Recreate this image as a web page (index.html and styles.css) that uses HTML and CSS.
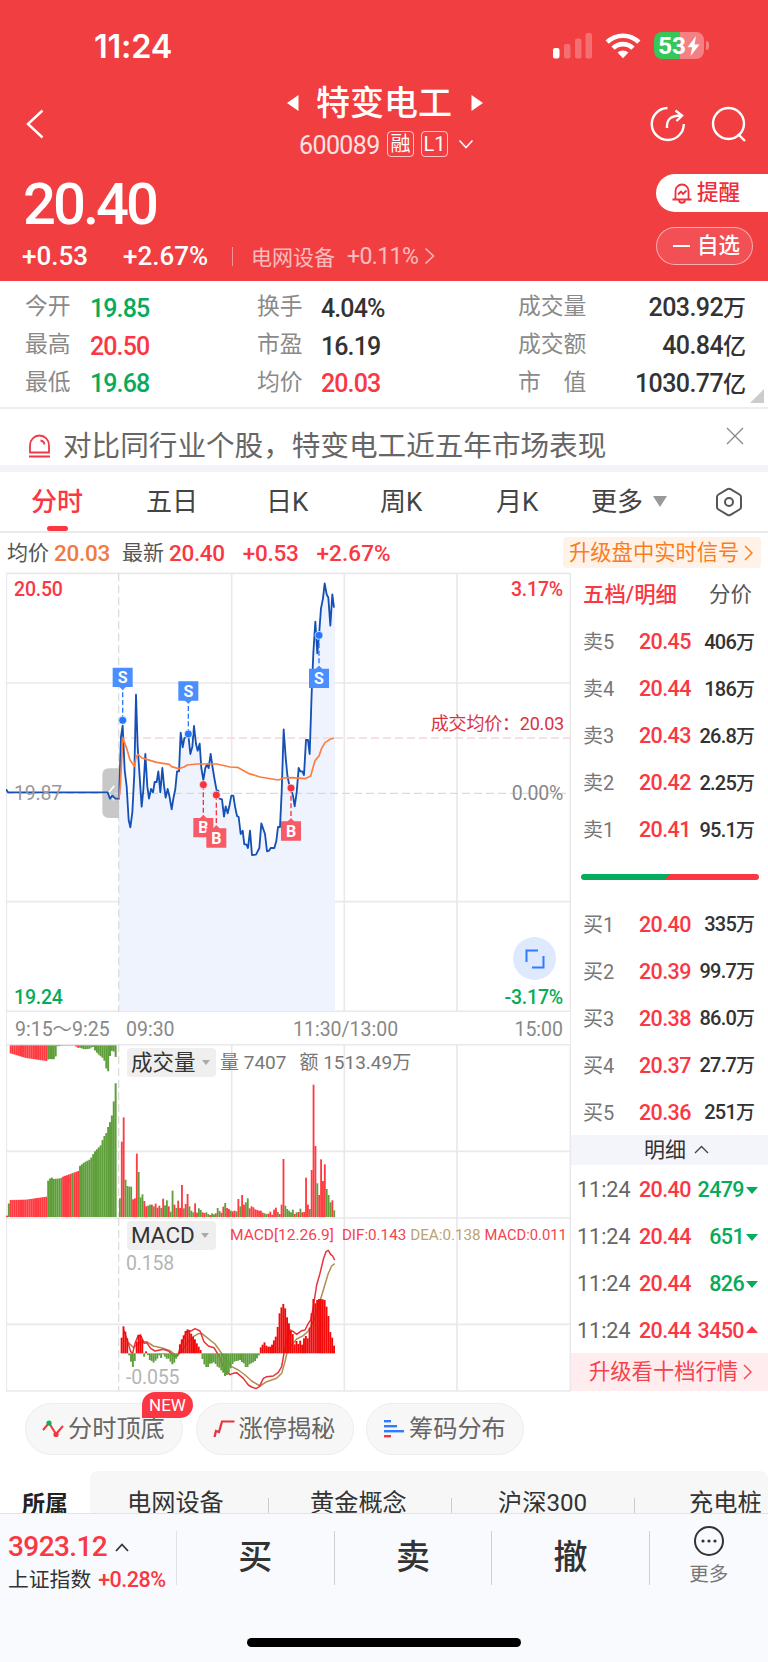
FILE: index.html
```html
<!doctype html>
<html lang="zh-CN">
<head>
  <meta charset="utf-8" />
  <meta name="viewport" content="width=device-width,initial-scale=1" />
  <title>特变电工 600089</title>
  <link rel="stylesheet" href="styles.css">
</head>

<body>
<header class="top">
  <div class="status">
    <div class="clock">11:24</div>
    <svg class="signal" width="40" height="26" viewBox="0 0 40 26" fill="#fff">
      <rect x="0" y="15" width="6.5" height="10.5" rx="2"/>
      <g opacity=".25"><rect x="11" y="11" width="6.5" height="14.5" rx="2"/><rect x="22" y="5.5" width="6.5" height="20" rx="2"/><rect x="32.5" y="0" width="6.5" height="25.5" rx="2"/></g>
    </svg>
    <svg class="wifi" width="36" height="27" viewBox="0 0 36 27">
      <g fill="none" stroke="#fff" stroke-width="4.6"><path d="M2.2 10.2a22.4 22.4 0 0 1 31.6 0"/><path d="M8 16.2a14.2 14.2 0 0 1 20 0"/></g>
      <path fill="#fff" d="M12.6 20.6a7.8 7.8 0 0 1 10.8 0L18 26.3z"/>
    </svg>
    <div class="battery">53<svg width="13" height="20" viewBox="0 0 13 20"><path fill="#fff" d="M9 0 .5 11.2h4.7L3.6 20l8.9-11.6H7.6z"/></svg></div>
  </div>

  <div class="nav">
    <svg class="back" width="20" height="32" viewBox="0 0 20 32"><path d="M17.5 2.5 3 16l14.500 13.500" fill="none" stroke="#fff" stroke-width="2.4"/></svg>
    <div class="name">
      <div class="title">
        <svg width="12" height="18" viewBox="0 0 12 18"><path fill="#fff" d="M11.500 1v16L0 9z"/></svg>
        <h1>特变电工</h1>
        <svg width="12" height="18" viewBox="0 0 12 18"><path fill="#fff" d="M.5 1v16L12 9z"/></svg>
      </div>
      <div class="code">
        <span class="num">600089</span><span class="tag">融</span><span class="tag l1">L1</span>
        <svg width="16" height="11" viewBox="0 0 16 11"><path d="m1.500 1.500 6.500 7 6.500-7" fill="none" stroke="#fff" stroke-width="1.600"/></svg>
      </div>
    </div>
    <div class="tools">
      <svg width="36" height="36" viewBox="0 0 36 36" fill="none" stroke="#fff" stroke-width="2.400">
        <path d="M17.500 2A16 16 0 1 0 33.800 18"/><path d="M17 22c-.6-8 3-12.500 14-12.500M25.500 4.500l6.500 5-5.500 5.500"/>
      </svg>
      <svg width="36" height="36" viewBox="0 0 36 36" fill="none" stroke="#fff" stroke-width="2.400">
        <circle cx="17.500" cy="17.500" r="15.500"/><path d="m27 28 7 7"/>
      </svg>
    </div>
  </div>

  <div class="quote">
    <div>
      <div class="price">20.40</div>
      <div class="change">
        <b>+0.53</b><b class="pct">+2.67%</b><i></i><span class="sector">电网设备</span><span class="spct">+0.11%</span>
        <svg width="11" height="18" viewBox="0 0 11 18"><path d="m1.500 1.500 8 7.500-8 7.500" fill="none" stroke="#fff" stroke-opacity=".65" stroke-width="1.500"/></svg>
      </div>
    </div>
    <div class="pills">
      <div class="pill alert">
        <svg width="20" height="22" viewBox="0 0 20 22" fill="none" stroke="#ee2f3c" stroke-width="1.800"><path d="M3.500 17V9a6.500 6.500 0 0 1 13 0v8M.5 17.500h19M7 18.500c.5 3 5.500 3 6 0M6 12.500l3-3 2 2.500 3.500-3.500"/></svg>提醒
      </div>
      <div class="pill fav"><i></i>自选</div>
    </div>
  </div>
</header>

<section class="stats">
  <span>今开</span><b class="dn">19.85</b><span>换手</span><b>4.04%</b><span>成交量</span><b class="r">203.92<em>万</em></b>
  <span>最高</span><b class="up">20.50</b><span>市盈</span><b>16.19</b><span>成交额</span><b class="r">40.84<em>亿</em></b>
  <span>最低</span><b class="dn">19.68</b><span>均价</span><b class="up">20.03</b><span>市　值</span><b class="r">1030.77<em>亿</em></b>
  <svg class="corner" width="14" height="14"><path fill="#ccc" d="M14 0v14H0z"/></svg>
</section>

<section class="notice">
  <svg width="23" height="24" viewBox="0 0 23 24" fill="none" stroke="#ee3a46" stroke-width="1.800"><path d="M2 18.500V11a9.500 9.500 0 0 1 19 0v7.500zM1 22.500h21M12.500 6.500c2.300.3 3.700 1.700 4 4"/></svg>
  <span>对比同行业个股，特变电工近五年市场表现</span>
  <svg class="close" width="18" height="18" viewBox="0 0 18 18"><path d="m1 1 16 16M17 1 1 17" stroke="#888" stroke-width="1.300"/></svg>
</section>

<nav class="tabs">
  <span class="on">分时</span><span>五日</span><span>日K</span><span>周K</span><span>月K</span><span>更多</span>
  <svg width="14" height="11"><path fill="#999" d="M0 0h14L7 11z"/></svg>
  <svg class="gear" width="28" height="30" viewBox="0 0 28 30" fill="none" stroke="#555" stroke-width="2"><path d="M12.500 2.200q1.500-.9 3 0l9 5.300q1.500.9 1.500 2.600v9.800q0 1.700-1.500 2.600l-9 5.300q-1.500.9-3 0l-9-5.300Q2 21.600 2 19.900v-9.800q0-1.700 1.500-2.600z"/><circle cx="14" cy="15" r="4"/></svg>
</nav>

<div class="info">
  <span>均价</span><b class="avg">20.03</b><span>最新</span><b>20.40</b><b class="d1">+0.53</b><b class="d2">+2.67%</b>
  <div class="upgrade">升级盘中实时信号<svg width="9" height="16" viewBox="0 0 9 16"><path d="m1 1 7 7-7 7" fill="none" stroke="#fa7d1e" stroke-width="1.500"/></svg></div>
</div>

<main class="main">
  <div class="chart">
    <div class="panel p-price">
      <svg width="565" height="440" viewBox="18 36 1695 1320">
        <g class="grid"><path d="M18 40H1711M18 369H1711M18 1025H1711M18 1354H1711M19 40V1356M695 40V1356M1033 40V1356M1371 40V1356M1711 40V1356"/></g>
        <path id="area" fill="#eef3fe"/>
        <path class="vdash" d="M356 40V1356"/>
        <path d="M307 645q0-20 20-20h30v149h-30q-20 0-20-20z" fill="#c8c8c8"/>
        <path d="M343 677l-18 22 18 22" fill="none" stroke="#fff" stroke-width="5"/>
        <path d="M357 534H1711" stroke="#f9d3d6" stroke-width="5" stroke-dasharray="24 12"/>
        <path d="M18 700H1711" stroke="#d3dbe3" stroke-width="4" stroke-dasharray="24 12"/>
        <path id="line" fill="none" stroke="#1550b4" stroke-width="5.500" stroke-linejoin="round"/>
        <path d="M357 716 361 680 368 533 380 565 390 600 403 619 408 592 414 583 426 594 440 598 470 607 508 613 515 620 535 626 552 621 562 615 590 612 650 612 690 621 712 622 745 640 780 651 835 660 850 654 875 653 915 656 932 648 937 630 945 602 957 588 965 565 975 548 990 538 1002 534" fill="none" stroke="#fb7d3f" stroke-width="5" stroke-linejoin="round"/>
        <g id="marks"></g>
      </svg>
      <span class="lb tl up">20.50</span><span class="lb tr up">3.17%</span>
      <span class="lb ml">19.87</span><span class="lb mr">0.00%</span>
      <span class="lb bl dn">19.24</span><span class="lb br dn">-3.17%</span>
      <span class="lb deal">成交均价：<em>20.03</em></span>
      <div class="full"><svg width="20" height="20" viewBox="0 0 20 20" fill="none" stroke="#2f7bff" stroke-width="2"><path d="M13 1.500H1.500V13M7 18.500h11.500V7"/></svg></div>
    </div>
    <div class="axis"><span>9:15～9:25</span><span>09:30</span><span>11:30/13:00</span><span>15:00</span></div>
    <div class="panel p-vol">
      <svg width="565" height="173" viewBox="18 132 1695 519">
        <g class="grid"><path d="M18 134H1711M18 454H1711M19 132V652M695 132V652M1033 132V652M1371 132V652M1711 132V652"/></g>
        <path class="vdash" d="M356 132V652"/>
        <g id="vol"></g>
      </svg>
      <div class="legend"><span class="pick">成交量<i></i></span><span>量 7407</span><span class="amt">额 1513.49万</span></div>
    </div>
    <div class="panel p-macd">
      <svg width="565" height="175" viewBox="18 21 1695 525">
        <g class="grid"><path d="M18 24H1711M18 343H1711M18 543H1711M19 21V543M695 21V543M1033 21V543M1371 21V543M1711 21V543"/></g>
        <path class="vdash" d="M356 24V543"/>
        <g fill="none" stroke-width="4.500" stroke-linejoin="round">
          <path stroke="#b28d55" d="M385 398 400 412 410 405 425 395 440 395 460 408 490 415 510 422 530 438 545 425 560 400 580 380 595 371 605 370 620 382 645 402 660 423 675 445 695 470 715 480 735 495 755 513 780 528 800 515 830 505 845 490 855 455 863 420 890 387 910 377 925 363 940 335 955 290 970 240 985 190 995 168 1004 161"/>
          <path stroke="#e8323a" d="M371 360 385 400 392 425 398 430 405 400 415 376 424 380 432 400 440 398 452 415 465 423 490 418 505 423 525 440 533 437 545 400 560 365 575 362 585 356 600 363 612 395 625 408 642 413 655 435 675 480 690 494 700 490 710 488 730 505 745 525 755 531 768 536 778 530 790 505 800 500 820 498 835 487 845 470 852 430 858 400 870 360 880 365 890 373 905 362 915 360 925 340 933 328 940 290 950 225 960 190 970 148 978 125 985 121 992 133 998 138 1004 150"/>
        </g>
        <g id="macd"></g>
      </svg>
      <div class="legend"><span class="pick">MACD<i></i></span><span class="m1">MACD[12.26.9]</span><span class="m2">DIF:0.143</span><span class="m3">DEA:0.138</span><span class="m4">MACD:0.011</span></div>
      <span class="lb hi">0.158</span><span class="lb lo">-0.055</span>
    </div>
  </div>

  <aside class="book">
    <div class="bookhead"><b>五档/明细</b><span>分价</span></div>
    <div class="lv"><span>卖5</span><b>20.45</b><em>406<u>万</u></em></div>
    <div class="lv"><span>卖4</span><b>20.44</b><em>186<u>万</u></em></div>
    <div class="lv"><span>卖3</span><b>20.43</b><em>26.8<u>万</u></em></div>
    <div class="lv"><span>卖2</span><b>20.42</b><em>2.25<u>万</u></em></div>
    <div class="lv"><span>卖1</span><b>20.41</b><em>95.1<u>万</u></em></div>
    <div class="ratio"><i></i></div>
    <div class="lv"><span>买1</span><b>20.40</b><em>335<u>万</u></em></div>
    <div class="lv"><span>买2</span><b>20.39</b><em>99.7<u>万</u></em></div>
    <div class="lv"><span>买3</span><b>20.38</b><em>86.0<u>万</u></em></div>
    <div class="lv"><span>买4</span><b>20.37</b><em>27.7<u>万</u></em></div>
    <div class="lv"><span>买5</span><b>20.36</b><em>251<u>万</u></em></div>
    <div class="band">明细<svg width="15" height="9" viewBox="0 0 15 9"><path d="m1 8 6.500-6.500L14 8" fill="none" stroke="#444" stroke-width="1.400"/></svg></div>
    <div class="tick"><span>11:24</span><b>20.40</b><em class="dn">2479</em><i class="dn"></i></div>
    <div class="tick"><span>11:24</span><b>20.44</b><em class="dn">651</em><i class="dn"></i></div>
    <div class="tick"><span>11:24</span><b>20.44</b><em class="dn">826</em><i class="dn"></i></div>
    <div class="tick"><span>11:24</span><b>20.44</b><em class="up">3450</em><i class="up"></i></div>
    <div class="ten">升级看十档行情<svg width="9" height="16" viewBox="0 0 9 16"><path d="m1 1 7 7-7 7" fill="none" stroke="#f5434e" stroke-width="1.400"/></svg></div>
  </aside>
</main>

<div class="chips">
  <div class="chip">
    <svg width="22" height="18" viewBox="0 0 22 18"><path d="m1 10 6-7 7 11 7-8" fill="none" stroke="#f5343f" stroke-width="2"/><circle cx="7" cy="3" r="2.600" fill="#0fae5c"/><circle cx="14" cy="14.500" r="2.600" fill="#f5343f"/></svg>分时顶底<span class="new">NEW</span>
  </div>
  <div class="chip">
    <svg width="22" height="18" viewBox="0 0 22 18"><path d="M1.500 17 3 11l3 1L9 1.500h12.500" fill="none" stroke="#e8323c" stroke-width="2.200"/></svg>涨停揭秘
  </div>
  <div class="chip">
    <svg width="22" height="18" viewBox="0 0 22 18" fill="#2f7bff"><rect x="1" y="0" width="7" height="2.400"/><rect x="1" y="5" width="13" height="2.400"/><rect x="1" y="10" width="20" height="2.400"/><rect x="1" y="15" width="7" height="2.400" fill="#f5343f"/></svg>筹码分布
  </div>
</div>

<section class="belong">
  <b>所属</b>
  <div class="tags"><span>电网设备</span><span>黄金概念</span><span>沪深300</span><span>充电桩</span></div>
</section>

<footer class="foot">
  <div class="bar">
    <div class="index">
      <div class="pt">3923.12<svg width="14" height="9" viewBox="0 0 14 9"><path d="m1 8 6-6.500L13 8" fill="none" stroke="#333" stroke-width="1.800"/></svg></div>
      <div class="ix">上证指数<b>+0.28%</b></div>
    </div>
    <div class="act">买</div><div class="act">卖</div><div class="act">撤</div>
    <div class="more">
      <svg width="32" height="32" viewBox="0 0 32 32"><circle cx="16" cy="16" r="14" fill="none" stroke="#333" stroke-width="2"/><g fill="#333"><circle cx="10" cy="16" r="1.600"/><circle cx="16" cy="16" r="1.600"/><circle cx="22" cy="16" r="1.600"/></g></svg>
      更多
    </div>
  </div>
  <div class="home"></div>
</footer>

<script>
const $=id=>document.getElementById(id);
const RED="#ff3b41",GREEN="#5f9f3b";

// price line, one point per minute
const pts="18,688 24,697 323,697 330,716 337,707 346,716 357,716 363,530 368,497 374,630 380,680 386,780 391,802 397,757 403,640 408,404 413,560 425,740 430,690 436,582 442,680 447,716 453,687 459,697 464,666 470,666 475,634 481,697 487,624 492,676 497,713 503,687 508,707 515,748 520,716 526,687 531,634 537,634 542,518 548,562 553,535 565,524 571,582 577,560 582,498 588,552 593,572 599,551 604,624 610,660 616,624 621,613 626,624 632,582 638,624 644,660 650,692 655,692 658,716 666,718 672,770 677,739 683,760 688,739 694,707 700,707 705,739 711,768 716,771 722,822 728,812 733,853 739,853 744,864 750,812 756,885 768,884 778,864 784,790 795,822 801,874 807,872 812,864 823,864 829,843 834,801 840,801 845,697 851,508 857,592 862,645 868,676 873,684 879,707 884,739 890,697 896,624 901,634 907,634 912,645 918,540 924,540 929,582 935,400 940,280 946,185 952,280 957,226 963,145 969,115 974,70 980,103 985,113 991,197 997,103 1002,143".split(" ");
$("line").setAttribute("d","M"+pts.join("L"));
$("area").setAttribute("d","M"+pts.slice(6).join("L")+"L1005,143V1353H357Z");

// trade marks: x, y of the dot, y of the tag centre
const marks=[["S",368,481,352],["S",565,522,393],["S",957,226,355],["B",610,674,803],["B",649,705,834],["B",873,684,813]];
$("marks").innerHTML=marks.map(([t,x,y,b])=>{
  const s=t=="S",c=s?"#2378ff":"#f5343f",d=b<y?1:-1;
  return `<path d="M${x} ${y}V${b+d*34}" stroke="${c}" stroke-width="4" stroke-dasharray="15 8"/>
  <circle cx="${x}" cy="${y}" r="12" fill="${c}" stroke="#fff" stroke-width="2"/>
  <path d="M${x-30} ${b-29}h60v58h-60zM${x-10} ${b+d*29}h20l-10 ${d*9}z" fill="${s?"#4a8eff":"#f75b66"}"/>
  <text x="${x}" y="${b+17}" class="mk">${t}</text>`;
}).join("");

const rect=(x,y,w,h,c)=>`<rect x="${x}" y="${y}" width="${w}" height="${h}" fill="${c}"/>`;
const lerp=(k,x)=>{let i=1;while(i<k.length-1&&k[i][0]<x)i++;const[a,b]=k[i-1],[c,d]=k[i];return b+(d-b)*Math.min(1,Math.max(0,(x-a)/(c-a)))};

// call auction: matched volume below, unmatched above
let out="";
const low=[[18,647],[23,612],[28,600],[75,599],[137,590],[139,545],[145,538],[151,531],[157,537],[180,535],[183,531],[232,513],[234,500],[250,487],[268,478],[280,456],[301,434],[306,415],[316,399],[323,376],[329,362],[335,337],[340,288],[346,230]];
const high=[[28,160],[75,174],[137,183],[143,177],[163,178],[168,139],[185,137],[224,137],[229,145],[234,142],[250,148],[268,146],[275,138],[281,150],[291,162],[309,177],[317,210],[323,215],[329,146],[335,157],[341,153],[346,183]];
for(let i=0;i<59;i++){
  const x=18+i*5.62,y=lerp(low,x);
  const red=i!=1&&(x<140||x>182&&x<232&&!(x>214&&x<219));
  out+=rect(x,y,5.9,652-y,red?RED:GREEN);
  if(x>26)out+=rect(x,136,5.9,lerp(high,x)-136,x<140||x>182&&x<232?RED:GREEN);
}
// continuous trading
const vol="g595 r425 r352 g539 g558 g560 g560 r598 r595 r461 g516 g592 g583 r603 r619 g617 g614 r614 g619 r611 r623 r617 g624 r596 g616 g601 r619 g635 g572 r614 g624 r602 r624 r555 g625 r612 r582 g619 g632 g637 r610 r638 g625 g630 r637 r639 g637 g642 r645 g640 g643 r640 g624 g633 r638 r620 g609 r624 r627 g632 r634 r632 g634 r597 g619 r585 r614 g607 g595 r625 r619 r622 r628 r630 r632 r632 r638 g640 g642 r641 r635 r644 r629 r623 g636 r642 r614 r477 g617 g627 g632 g637 g629 r642 g637 r636 g626 r637 r636 r533 r614 g627 r510 r254 r438 g550 r585 r478 r543 r493 g567 g585 g607 r601 g631".split(" ");
vol.forEach((v,i)=>{const y=+v.slice(1);out+=rect(357+i*5.64,y,5.5,652-y,v[0]=="r"?RED:GREEN)});
$("vol").innerHTML=out;

const macd=[383,349,365,385,436,455,471,453,395,375,373,388,440,424,435,450,453,458,452,446,436,444,433,440,446,446,455,463,458,446,433,403,388,376,363,358,360,371,380,388,400,410,420,447,463,471,471,461,460,457,462,470,473,481,488,498,495,488,475,462,455,453,452,450,456,460,471,471,463,460,457,453,445,436,412,404,397,407,410,410,404,391,380,351,310,292,282,295,322,340,362,372,403,393,402,392,404,385,378,385,353,310,267,280,270,267,267,268,270,290,318,366,383,407];
$("macd").innerHTML=macd.map((y,i)=>rect(362+i*5.64,Math.min(y,430),5.7,Math.abs(430-y),y<430?"#f20a0a":GREEN)).join("");
</script>
</body>
</html>
```
FILE: styles.css
```css
:root{
  --red:#fa3743;
  --green:#06ab5b;
  --head:#f13e41;
  --text:#333;
  --line:#e9e9eb;
}
*{box-sizing:border-box}
body{
  margin:0;
  width:768px;
  height:1662px;
  overflow:hidden;
  display:flex;
  flex-direction:column;
  font-family:Roboto,"Noto Sans CJK SC",sans-serif;
  background:#fff;
  color:var(--text);
}
svg{display:block;flex:none}
b{font-weight:500}
em,i{font-style:normal}
u{text-decoration:none}
.up{color:var(--red)}
.dn{color:var(--green)}

/* ===== 顶部 ===== */
.top{height:281px;background:var(--head);color:#fff;flex:none}
.status{height:80px;padding:32px 0 0 94px;display:flex}
.clock{width:459px;font:600 32.5px/29px Inter,sans-serif;letter-spacing:-.2px}
.signal{margin:1px 12px 0 0}
.wifi{margin-right:13px}
.battery{
  width:50px;height:27px;border-radius:8px;
  background:linear-gradient(90deg,#35c759 53%,#f58083 53%);
  display:flex;align-items:center;padding-left:4px;gap:1px;
  font:700 24.5px/27px Roboto,sans-serif;
  position:relative;
}
.battery::after{content:"";position:absolute;left:52px;top:9px;width:3px;height:9px;border-radius:0 4px 4px 0;background:#f58083}

.nav{height:90px;display:flex}
.back{margin:28px 0 0 25px}
.name{width:427px;margin-left:165px;margin-right:13px}
.title{display:flex;align-items:center;height:45px;padding-left:77px}
h1{margin:0 18px 0 17px;width:137px;font-weight:500;font-size:34px;line-height:44px}
.code{display:flex;align-items:center;height:39px;padding-left:89px;gap:7px}
.num{font-size:25px;width:81px;letter-spacing:-.6px;opacity:.85;padding-top:1px}
.tag{width:27px;height:26px;margin-top:-2px;border:1px solid rgba(255,255,255,.7);border-radius:4px;font-size:20px;line-height:24px;text-align:center}
.l1{font-size:20px}
.code svg{margin-left:3px}
.tools{display:flex;gap:25px;padding-top:26px}

.quote{display:flex;justify-content:space-between;padding-left:23px}
.price{font-size:58px;font-weight:500;line-height:68px;height:68px;letter-spacing:-3px}
.change{display:flex;align-items:center;height:36px;font-size:26px;letter-spacing:0;white-space:nowrap}
.change b{width:102px;margin-left:-1px}
.change b.pct{width:109px}
.change i{width:1px;height:19px;background:rgba(255,255,255,.45);margin-right:18px}
.sector{font-size:21px;width:96px;opacity:.65;letter-spacing:0}
.spct{font-size:23px;width:77px;opacity:.65;letter-spacing:-.6px}
.pills{width:112px;padding-top:4px}
.pill{height:38px;display:flex;align-items:center;font-size:21.5px;line-height:36px}
.alert{background:#fff;color:#ee2f3c;border-radius:19px 0 0 19px;padding-left:16px;gap:5px;font-weight:500;margin-bottom:15px}
.fav{width:97px;border:1px solid rgba(255,255,255,.55);border-radius:19px;background:#f25054;padding-left:16px;font-weight:500}
.fav i{width:17px;height:2px;background:#fff;margin-right:7px}

/* ===== 行情数据 ===== */
.stats{
  height:128px;padding:7px 22px 0 25px;flex:none;
  display:grid;
  grid-template-columns:65px 167px 64px 197px 88px 1fr;
  grid-auto-rows:37.7px;
  align-items:center;
  border-bottom:2px solid #eee;
  position:relative;
}
.stats span{font-size:22.8px;color:#8a8a8a;line-height:37px;white-space:nowrap}
.stats b{font-size:25px;letter-spacing:-.9px;line-height:37px;padding-top:3px}
.stats b.r{text-align:right;white-space:nowrap;letter-spacing:-.6px}
.stats em{font-size:23px;letter-spacing:0}
.corner{position:absolute;right:4px;bottom:4px}

.notice{
  height:63px;flex:none;display:flex;align-items:center;
  padding:17px 24px 0 28px;
  border-bottom:7px solid #f2f3f9;
  font-size:28.600px;line-height:38px;color:#666;
}
.notice span{margin-left:12px;flex:1;white-space:nowrap}
.close{margin-bottom:20px}

.tabs{
  height:61px;flex:none;display:flex;align-items:center;
  border-bottom:2px solid #eaeaea;
  font-size:26px;color:#444;padding-left:31px;
}
.tabs span{width:115px;line-height:57px;padding-top:2px}
.tabs span:nth-child(2){width:120px}
.tabs span:nth-child(3){width:114px}
.tabs span:nth-child(4){width:116px}
.tabs span:nth-child(5){width:95px}
.tabs span:nth-child(6){width:62px}
.tabs .on{color:var(--red);font-weight:500;position:relative}
.tabs .on::after{content:"";position:absolute;left:16px;bottom:0;width:21px;height:5px;border-radius:2.500px;background:var(--red)}
.gear{margin-left:48px}

.info{
  height:39px;flex:none;display:flex;align-items:center;
  padding:0 7px 0 7px;font-size:21px;line-height:36px;color:#555;
}
.info b{font-size:22.500px;letter-spacing:-.3px;color:var(--red);margin:1px 12px 0 5px}
.info b.avg{color:#f07a40}
.info b.d1{margin-left:6px}
.info b.d2{margin-left:6px;letter-spacing:.1px}
.upgrade{margin-left:auto;height:31px;width:198px;padding-left:6px;border-radius:4px;background:#fff3e9;color:#fa7d1e;font-size:21.300px;line-height:31px;display:flex;align-items:center;gap:5px;white-space:nowrap}

/* ===== 图表 ===== */
.main{display:flex;height:820px;flex:none}
.chart{width:565px;margin-left:6px;flex:none}
.panel{position:relative}
.p-price{height:440px}
.p-vol{height:173px}
.p-macd{height:175px}
.grid path{fill:none;stroke:var(--line);stroke-width:5}
.vdash{stroke:#ddd;stroke-width:4;stroke-dasharray:24 12}
.mk{fill:#fff;font:700 48px Roboto,sans-serif;text-anchor:middle}
.lb{position:absolute;font-size:19.500px;font-weight:500;line-height:24px;letter-spacing:-.2px;white-space:nowrap}
.tl{left:8px;top:6px}
.tr{right:8px;top:6px}
.ml{left:8px;top:210px;color:#999;font-weight:400}
.mr{right:8px;top:210px;color:#888;font-weight:400}
.bl{left:8px;bottom:2px}
.br{right:8px;bottom:2px}
.deal{right:7px;top:140px;font-size:18px;font-weight:400;color:#d9333f}
.deal em{font-size:18px}
.full{position:absolute;right:15px;top:365px;width:43px;height:43px;border-radius:50%;background:#dfe9fe;display:flex;align-items:center;justify-content:center}
.axis{
  height:32px;display:grid;grid-template-columns:111px 167px 1fr 60px;
  padding:2px 7px 0 8px;font-size:19.500px;line-height:32px;color:#888;
  border-left:1.500px solid var(--line);border-right:1.500px solid var(--line);white-space:nowrap;
}
.axis span:last-child{text-align:right}
.legend{position:absolute;left:121px;top:4px;display:flex;align-items:center;font-size:19px;line-height:29px;color:#777;white-space:nowrap}
.pick{width:89px;height:29px;padding-left:4px;border-radius:4px;background:#efefef;color:#333;font-size:21.500px;display:flex;align-items:center;margin-right:4px}
.pick i{border:4.500px solid transparent;border-top:5px solid #aaa;border-bottom:0;margin-left:6px}
.amt{margin-left:13px}
.p-macd .legend{top:4px;font-size:15.500px;color:#f5434e}
.p-macd .pick{font-size:22.500px;margin-right:14px}
.m2{margin-left:8px}
.legend .m2,.legend .m3{font-size:15.200px}
.legend .m3{color:#bba272;margin:0 4px}
.legend .m4{font-size:14.700px}
.hi{left:120px;top:35px;color:#b5b5b5;font-weight:400}
.lo{left:120px;top:149px;color:#b5b5b5;font-weight:400}

/* ===== 五档 ===== */
.book{width:197px;height:819px;display:flex;flex-direction:column}
.bookhead{height:46px;padding:0 0 0 12px;display:flex;align-items:center;font-size:21.400px;line-height:42px}
.bookhead b{color:var(--red);width:126px;white-space:nowrap}
.bookhead span{color:#555}
.lv,.tick{height:47px;display:flex;align-items:center;padding:3px 0 0 12px;font-size:21.500px;line-height:44px}
.lv span{width:56px;color:#777;font-size:20px}
.lv b,.tick b{color:var(--red);width:52px;letter-spacing:-.6px}
.lv em{width:64px;text-align:right;font-size:20px;font-weight:500;letter-spacing:-.8px;white-space:nowrap}
.lv u{font-size:19px;letter-spacing:0}
.ratio{height:48px;padding:22px 9px 0 10px}
.ratio i{display:block;height:6px;border-radius:3px;background:linear-gradient(125deg,var(--green) 48.500%,var(--red) 48.500%)}
.band{height:31px;background:#f3f5fa;display:flex;align-items:center;justify-content:center;gap:8px;font-size:21px;line-height:30px;padding-left:14px}
.tick{padding-left:6px}
.tick span{width:62px;color:#666}
.tick em{width:53px;text-align:right;letter-spacing:-.6px;font-weight:500}
.tick i{border:6.500px solid transparent;border-top:7px solid;border-bottom:0;margin-left:2px}
.tick i.up{border:6.500px solid transparent;border-bottom:7px solid;border-top:0;margin-bottom:4px}
.ten{margin-top:auto;height:38px;background:#ffecee;color:#f5434e;display:flex;align-items:center;gap:5px;padding-left:18px;font-size:21.300px;line-height:38px;white-space:nowrap}

/* ===== 功能入口 ===== */
.chips{height:79px;flex:none;padding:11px 0 0 25px;display:flex;gap:12.500px}
.chip{position:relative;width:158px;height:52px;border:1.500px solid #ededed;border-radius:26px;background:#f7f7f7;display:flex;align-items:center;padding-left:16px;gap:4px;font-size:24.200px;line-height:46px;color:#666;white-space:nowrap}
.new{position:absolute;right:-11px;top:-12px;width:51px;height:26px;border-radius:13px 13px 13px 0;background:var(--red);color:#fff;font-size:17px;line-height:27px;text-align:center}

.belong{height:42px;flex:none;overflow:hidden;display:flex}
.belong b{width:90px;flex:none;padding-left:22px;font-weight:700;font-size:23px;line-height:68px;color:#222}
.tags{flex:1;height:60px;background:#f7f7f7;border-radius:8px 8px 0 0;display:flex;font-size:24.200px;line-height:64px;padding-left:37px}
.tags span{position:relative;width:183px;flex:none;white-space:nowrap}
.tags span:nth-child(2){width:188px}
.tags span:nth-child(3){width:191px}
.tags span:last-child{width:78px}
.tags span::after{content:"";position:absolute;left:141px;top:27px;width:1px;height:30px;background:#ccc}
.tags span:nth-child(3)::after{left:136px}
.tags span:last-child::after{display:none}

/* ===== 底部 ===== */
.foot{flex:1;background:#f9fafd;border-top:1.500px solid #e2e3e6}
.bar{height:124px;padding-top:17px;display:flex}
.index{width:177px;height:54px;padding-left:8px;border-right:1px solid #e2e2e6}
.pt{display:flex;align-items:center;gap:8px;font-size:28px;font-weight:500;line-height:32px;height:32px;color:var(--red);letter-spacing:-.6px}
.ix{display:flex;gap:7px;font-size:20.800px;line-height:34px;white-space:nowrap}
.ix b{color:var(--red);font-size:21.500px;letter-spacing:-.5px}
.act{width:157.600px;height:54px;border-right:1px solid #cfcfd3;text-align:center;font-size:34px;line-height:53px;font-weight:500}
.more{width:118px;display:flex;flex-direction:column;align-items:center;margin-top:-6px;font-size:19.500px;line-height:25px;color:#777;gap:5px}
.home{width:274px;height:9px;margin:0 auto;border-radius:5px;background:#000}
```
